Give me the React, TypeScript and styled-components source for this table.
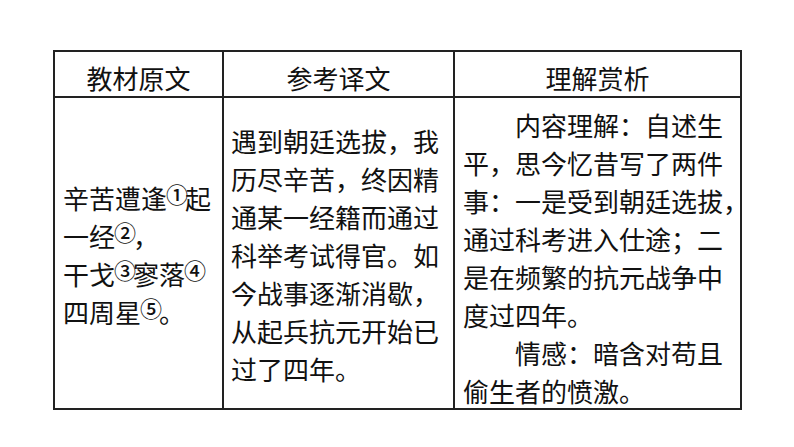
import React from "react";
import styled, { createGlobalStyle } from "styled-components";

const Global = createGlobalStyle`
  html, body { margin: 0; padding: 0; background: #ffffff; }
  body {
    font-family: "Noto Sans CJK SC", "Noto Sans", sans-serif;
    color: #111111;
  }
`;

const Page = styled.div`
  width: 794px;
  height: 447px;
  box-sizing: border-box;
  padding: 50px 0 0 53px;
  background: #ffffff;
`;

const Table = styled.div`
  display: grid;
  grid-template-columns: 169px 231px 287px;
  grid-template-rows: 46px 312px;
  width: max-content;
  border-top: 2px solid #222222;
  border-left: 2px solid #222222;
`;

const Cell = styled.div`
  box-sizing: border-box;
  border-right: 2px solid #222222;
  border-bottom: 2px solid #222222;
  font-size: 26px;
  line-height: 38px;
`;

const HeaderCell = styled(Cell)`
  display: flex;
  align-items: center;
  justify-content: center;
  padding-top: 8px;
`;

const BodyCell = styled(Cell)<{ $top?: boolean; $padLeft: number }>`
  display: flex;
  flex-direction: column;
  justify-content: ${(p) => (p.$top ? "flex-start" : "center")};
  padding: ${(p) => (p.$top ? "8px" : "4px")} 0 0 ${(p) => p.$padLeft}px;
`;

const Line = styled.span<{ $indent?: boolean }>`
  display: block;
  white-space: nowrap;
  text-indent: ${(p) => (p.$indent ? "2em" : "0")};
`;

const Note = styled.span`
  font-family: "Noto Sans CJK SC", sans-serif;
  font-size: 22px;
  font-weight: 500;
  line-height: 1;
  vertical-align: 6px;
  letter-spacing: -3px;
  margin-left: -1px;
`;

export default function App() {
  return (
    <>
      <Global />
      <Page>
        <Table>
          <HeaderCell>教材原文</HeaderCell>
          <HeaderCell>参考译文</HeaderCell>
          <HeaderCell>理解赏析</HeaderCell>

          <BodyCell $padLeft={8}>
            <Line>
              辛苦遭逢<Note>①</Note>起
            </Line>
            <Line>
              一经<Note>②</Note>，
            </Line>
            <Line>
              干戈<Note>③</Note>寥落<Note>④</Note>
            </Line>
            <Line>
              四周星<Note>⑤</Note>。
            </Line>
          </BodyCell>

          <BodyCell $padLeft={7}>
            <Line>遇到朝廷选拔，我</Line>
            <Line>历尽辛苦，终因精</Line>
            <Line>通某一经籍而通过</Line>
            <Line>科举考试得官。如</Line>
            <Line>今战事逐渐消歇，</Line>
            <Line>从起兵抗元开始已</Line>
            <Line>过了四年。</Line>
          </BodyCell>

          <BodyCell $top $padLeft={8}>
            <Line $indent>内容理解：自述生</Line>
            <Line>平，思今忆昔写了两件</Line>
            <Line>事：一是受到朝廷选拔，</Line>
            <Line>通过科考进入仕途；二</Line>
            <Line>是在频繁的抗元战争中</Line>
            <Line>度过四年。</Line>
            <Line $indent>情感：暗含对苟且</Line>
            <Line>偷生者的愤激。</Line>
          </BodyCell>
        </Table>
      </Page>
    </>
  );
}
